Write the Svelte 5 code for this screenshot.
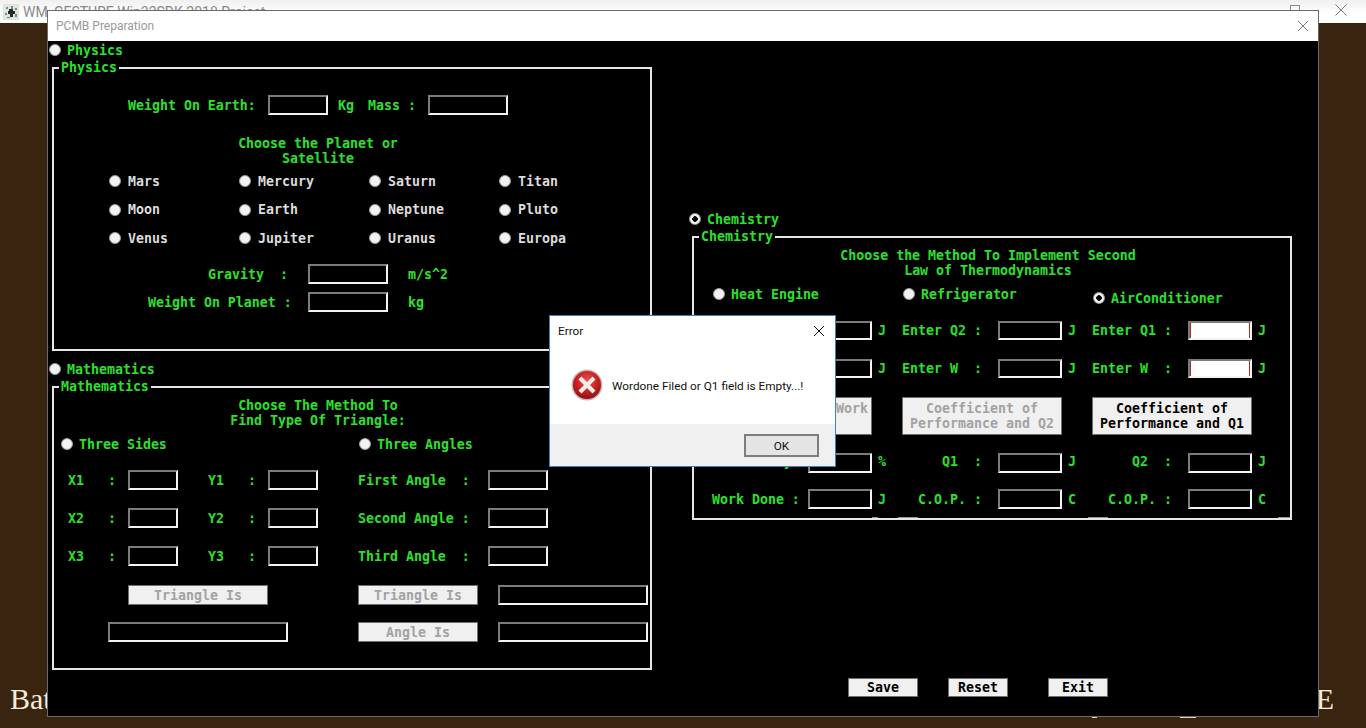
<script>
  const planets = ['Mars', 'Mercury', 'Saturn', 'Titan', 'Moon', 'Earth', 'Neptune', 'Pluto', 'Venus', 'Jupiter', 'Uranus', 'Europa'];

  const sideRows = [
    { x: 'X1', y: 'Y1', angle: 'First Angle  :' },
    { x: 'X2', y: 'Y2', angle: 'Second Angle :' },
    { x: 'X3', y: 'Y3', angle: 'Third Angle  :' }
  ];

  // one row of the thermodynamics table, three groups of label / field / unit
  const enterRows = [
    [
      { label: 'Enter Q1 :', unit: 'J' },
      { label: 'Enter Q2 :', unit: 'J' },
      { label: 'Enter Q1 :', unit: 'J', bad: true }
    ],
    [
      { label: 'Enter W  :', unit: 'J' },
      { label: 'Enter W  :', unit: 'J' },
      { label: 'Enter W  :', unit: 'J', bad: true }
    ]
  ];

  const resultRows = [
    [
      { label: 'Efficiency', unit: '%' },
      { label: 'Q1  :', unit: 'J', right: true },
      { label: 'Q2  :', unit: 'J', right: true }
    ],
    [
      { label: 'Work Done :', unit: 'J' },
      { label: 'C.O.P. :', unit: 'C', right: true },
      { label: 'C.O.P. :', unit: 'C', right: true }
    ]
  ];
</script>

<div class="desktop">
  <header class="appbar">
    <svg class="appicon" width="16" height="16" viewBox="0 0 16 16">
      <rect width="16" height="16" fill="#dfe6df" />
      <path d="M3 3h2v2H3zM8 2h2v3H8zM12 4h2v2h-2zM2 9h2v2H2zM12 10h2v3h-2zM4 13h3v1H4z" fill="#6f8f7c" />
      <path d="M6 5h4v2h2v3h-2v3H7v-3H5V7h1z" fill="#2a2a2a" />
    </svg>
    <span class="apptitle">WM_GESTURE Win32SDK 2018 Project</span>
    <span class="appctl min"></span>
    <span class="appctl restore"></span>
    <svg class="appclose" width="14" height="14" viewBox="0 0 14 14">
      <path d="M1.5 1.5l11 11M12.5 1.5l-11 11" stroke="#777" fill="none" />
    </svg>
  </header>

  <div class="backtext">
    <span>Bat</span>
    <span>E</span>
  </div>
  <span class="peek a"></span>
  <span class="peek b"></span>

  <section class="window">
    <div class="titlebar">
      <span>PCMB Preparation</span>
      <svg width="12" height="12" viewBox="0 0 12 12">
        <path d="M1 1l10 10M11 1L1 11" stroke="#777" fill="none" />
      </svg>
    </div>

    <div class="content">
      <div class="left">
        <label class="choice"><i class="radio"></i>Physics</label>
        <div class="panel physics">
          <span class="legend">Physics</span>
          <div class="earth-row">
            <span>Weight On Earth:</span>
            <span class="field"></span>
            <span class="unit">Kg</span>
            <span>Mass :</span>
            <span class="field"></span>
          </div>
          <div class="heading">Choose the Planet or<br />Satellite</div>
          <div class="planets">
            {#each planets as p}
              <label class="choice planet"><i class="radio"></i>{p}</label>
            {/each}
          </div>
          <div class="gravity-row">
            <span>Gravity  :</span>
            <span class="field"></span>
            <span class="unit wide">m/s^2</span>
          </div>
          <div class="planet-row">
            <span>Weight On Planet :</span>
            <span class="field"></span>
            <span class="unit wide">kg</span>
          </div>
        </div>

        <label class="choice second"><i class="radio"></i>Mathematics</label>
        <div class="panel maths">
          <span class="legend">Mathematics</span>
          <div class="heading small-top">Choose The Method To<br />Find Type Of Triangle:</div>
          <div class="method-row">
            <label class="choice"><i class="radio"></i>Three Sides</label>
            <label class="choice"><i class="radio"></i>Three Angles</label>
          </div>
          <div class="side-rows">
            {#each sideRows as r}
              <div class="side-row">
                <span>{r.x}</span><span>:</span><span class="field"></span>
                <span class="y">{r.y}</span><span>:</span><span class="field"></span>
                <span class="angle">{r.angle}</span><span class="field"></span>
              </div>
            {/each}
          </div>
          <div class="answer-row one">
            <button class="btn off" type="button">Triangle Is</button>
            <button class="btn off" type="button">Triangle Is</button>
            <span class="field"></span>
          </div>
          <div class="answer-row two">
            <span class="field"></span>
            <button class="btn off" type="button">Angle Is</button>
            <span class="field"></span>
          </div>
        </div>
      </div>

      <div class="right">
        <label class="choice chem-choice"><i class="radio on"></i>Chemistry</label>
        <div class="panel chemistry">
          <span class="legend">Chemistry</span>
          <div class="heading chem-heading">Choose the Method To Implement Second<br />Law of Thermodynamics</div>
          <div class="engine-row">
            <label class="choice"><i class="radio"></i>Heat Engine</label>
            <label class="choice"><i class="radio"></i>Refrigerator</label>
            <label class="choice lower"><i class="radio on"></i>AirConditioner</label>
          </div>
          <div class="table-rows enter">
            {#each enterRows as row}
              <div class="table-row">
                {#each row as c}
                  <span>{c.label}</span>
                  <span class="field" class:bad={c.bad}></span>
                  <span class="unit near">{c.unit}</span>
                {/each}
              </div>
            {/each}
          </div>
          <div class="method-btns">
            <button class="btn off" type="button">Efficiency and Work<br />Done</button>
            <button class="btn off" type="button">Coefficient of<br />Performance and Q2</button>
            <button class="btn" type="button">Coefficient of<br />Performance and Q1</button>
          </div>
          <div class="table-rows results">
            {#each resultRows as row}
              <div class="table-row">
                {#each row as c}
                  <span class="cell" class:to-right={c.right}>{c.label}</span>
                  <span class="field"></span>
                  <span class="cell unit near">{c.unit}</span>
                {/each}
              </div>
            {/each}
          </div>
        </div>

        <div class="actions">
          <button class="btn save" type="button">Save</button>
          <button class="btn reset" type="button">Reset</button>
          <button class="btn exit" type="button">Exit</button>
        </div>
      </div>
    </div>
  </section>

  <section class="dialog">
    <div class="dialog-title">
      <span>Error</span>
      <svg width="12" height="12" viewBox="0 0 12 12">
        <path d="M1 1l10 10M11 1L1 11" stroke="#111" fill="none" />
      </svg>
    </div>
    <div class="dialog-body">
      <svg width="32" height="32" viewBox="0 0 32 32">
        <defs>
          <radialGradient id="errfill" cx="50%" cy="35%" r="65%">
            <stop offset="0" stop-color="#e8534f" />
            <stop offset="0.6" stop-color="#c61f22" />
            <stop offset="1" stop-color="#8f1014" />
          </radialGradient>
        </defs>
        <circle cx="16" cy="16" r="15.5" fill="#c9b5b5" />
        <circle cx="16" cy="16" r="14" fill="url(#errfill)" />
        <path d="M10.5 7.500L16 13l5.500-5.500 3 3L19 16l5.500 5.500-3 3L16 19l-5.500 5.500-3-3L13 16l-5.500-5.500z" fill="#f3eeee" />
      </svg>
      <span>Wordone Filed or Q1 field is Empty...!</span>
    </div>
    <div class="dialog-foot">
      <button type="button">OK</button>
    </div>
  </section>
</div>

<style>
  :global(body) {
    margin: 0;
    background: #38240f;
  }

  .desktop {
    position: relative;
    width: 1366px;
    height: 728px;
    overflow: hidden;
    background: #38240f;
  }

  .appbar {
    display: flex;
    align-items: center;
    height: 23px;
    padding-left: 3px;
    background: linear-gradient(#f0f0f0, #fff 60%);
    color: #888;
    font: 14px Roboto, sans-serif;
  }
  .apptitle {
    margin-left: 4px;
  }
  .appctl {
    position: absolute;
    box-sizing: border-box;
  }
  .appctl.min {
    left: 1245px;
    top: 10px;
    width: 10px;
    height: 1px;
    background: #777;
  }
  .appctl.restore {
    left: 1290px;
    top: 5px;
    width: 10px;
    height: 10px;
    border: 1px solid #888;
  }
  .appclose {
    position: absolute;
    left: 1334px;
    top: 3px;
  }

  .backtext {
    position: absolute;
    left: 10px;
    right: 32px;
    top: 682px;
    display: flex;
    justify-content: space-between;
    color: #f6ecdc;
    font: 30px "Liberation Serif", serif;
  }
  .peek {
    position: absolute;
    top: 717px;
    height: 1px;
    background: #d8d0c0;
  }
  .peek.a {
    left: 1092px;
    width: 5px;
  }
  .peek.b {
    left: 1180px;
    width: 16px;
  }

  .window {
    position: absolute;
    left: 47px;
    top: 10px;
    width: 1272px;
    height: 707px;
    box-sizing: border-box;
    display: flex;
    flex-direction: column;
    border: 1px solid #6d6a66;
    background: #000;
  }
  .titlebar {
    display: flex;
    align-items: center;
    justify-content: space-between;
    height: 30px;
    flex: none;
    padding: 0 9px 0 8px;
    background: #fff;
    color: #999;
    font: 12px Roboto, sans-serif;
  }

  .content {
    flex: 1;
    display: flex;
    color: #2ce02c;
    font: bold 13.28px "DejaVu Sans Mono", monospace;
  }
  .left {
    width: 603px;
    box-sizing: border-box;
    padding-left: 1px;
    flex: none;
    margin-right: 1px;
  }
  .right {
    flex: 1;
    padding-left: 37px;
    display: flex;
    flex-direction: column;
  }

  .choice {
    display: flex;
    align-items: center;
    gap: 6px;
    height: 18px;
  }
  .radio {
    width: 12px;
    height: 12px;
    box-sizing: border-box;
    border-radius: 50%;
    flex: none;
    background: #f2f2f2;
    border: 1px solid #9a9a9a;
  }
  .radio.on {
    background: radial-gradient(circle, #000 0 2.5px, #f2f2f2 3px);
  }

  .second {
    margin-top: 9px;
  }
  .chem-choice {
    margin-top: 169px;
  }
  .left > .panel {
    margin-left: 3px;
    margin-top: 8px;
  }

  .panel {
    position: relative;
    box-sizing: border-box;
    width: 600px;
    height: 284px;
    border: 2px solid #e6e6e6;
  }
  .chemistry {
    margin-top: 8px;
    margin-left: 3px;
  }
  /* tops of the rows that are clipped by the bottom edge of the panel */
  .chemistry::after {
    content: '';
    position: absolute;
    left: 178px;
    bottom: 0;
    width: 418px;
    height: 1px;
    background:
      linear-gradient(#999, #999) 0 0 / 6px 1px no-repeat,
      linear-gradient(#999, #999) 26px 0 / 20px 1px no-repeat,
      linear-gradient(#999, #999) 216px 0 / 20px 1px no-repeat,
      linear-gradient(#999, #999) 406px 0 / 12px 1px no-repeat;
  }
  .legend {
    position: absolute;
    left: 5px;
    top: -9px;
    padding: 0 2px;
    line-height: 16px;
    background: #000;
  }

  .earth-row span,
  .gravity-row span,
  .planet-row span,
  .side-row span,
  .table-row span {
    white-space: pre;
  }

  .field {
    display: block;
    box-sizing: border-box;
    height: 20px;
    border: 2px solid;
    border-color: #7c7c7c #f4f4f4 #f4f4f4 #7c7c7c;
    background: #000;
  }
  .enter .field {
    height: 19px;
    margin-top: 1px;
  }
  .field.bad {
    background: #fff;
    box-shadow: inset 1px 0 0 #b3262c, inset -1px 0 0 #b3262c;
  }
  .unit {
    padding-left: 10px;
  }
  .unit.wide {
    padding-left: 20px;
  }
  .unit.near {
    padding-left: 6px;
  }

  .btn {
    display: block;
    box-sizing: border-box;
    height: 20px;
    padding: 0;
    border: 1px solid #6f6f6f;
    background: #f0f0f0;
    color: #000;
    font: inherit;
    line-height: 15px;
    white-space: pre;
  }
  .btn.off {
    color: #a2a2a2;
  }

  .heading {
    margin-top: 21px;
    padding-right: 68px;
    text-align: center;
    line-height: 15px;
  }
  .heading.small-top {
    margin-top: 10px;
  }
  .heading.chem-heading {
    margin-top: 10px;
    padding-right: 8px;
  }

  /* physics */
  .earth-row,
  .gravity-row,
  .planet-row {
    display: grid;
    align-items: center;
    height: 20px;
  }
  .earth-row {
    grid-template-columns: 140px 60px 40px 60px 80px;
    padding-left: 74px;
    margin-top: 26px;
  }
  .planets {
    display: grid;
    grid-template-columns: repeat(4, 130px);
    grid-auto-rows: 20px;
    row-gap: 8.5px;
    margin-top: 5px;
    padding-left: 55px;
    color: #dcdcdc;
  }
  .planet {
    height: 20px;
    gap: 7px;
  }
  .gravity-row {
    grid-template-columns: 100px 80px auto;
    padding-left: 154px;
    margin-top: 16px;
  }
  .planet-row {
    grid-template-columns: 160px 80px auto;
    padding-left: 94px;
    margin-top: 8px;
  }

  /* maths */
  .method-row {
    display: grid;
    grid-template-columns: 298px auto;
    padding-left: 7px;
    margin-top: 7px;
  }
  .side-rows {
    display: grid;
    row-gap: 18px;
    margin-top: 17px;
  }
  .side-row {
    display: grid;
    grid-template-columns: 40px 20px 50px 30px 40px 20px 50px 40px 130px 60px;
    align-items: center;
    height: 20px;
    padding-left: 14px;
  }
  .side-row .y {
    grid-column: 5;
  }
  .side-row .angle {
    grid-column: 9;
  }
  .answer-row {
    display: grid;
    align-items: center;
    height: 20px;
  }
  .answer-row.one {
    grid-template-columns: 140px 90px 120px 20px 150px;
    padding-left: 74px;
    margin-top: 19px;
  }
  .answer-row.one > :nth-child(2) {
    grid-column: 3;
  }
  .answer-row.one > :nth-child(3) {
    grid-column: 5;
  }
  .answer-row.two {
    grid-template-columns: 180px 70px 120px 20px 150px;
    padding-left: 54px;
    margin-top: 17px;
  }
  .answer-row.two > :nth-child(2) {
    grid-column: 3;
  }
  .answer-row.two > :nth-child(3) {
    grid-column: 5;
  }

  /* chemistry */
  .engine-row {
    display: grid;
    grid-template-columns: repeat(3, 190px);
    align-items: center;
    padding-left: 19px;
    margin-top: 7px;
  }
  .lower {
    transform: translateY(4px);
  }
  .table-rows {
    display: grid;
    padding-left: 18px;
  }
  .table-rows.enter {
    row-gap: 18px;
    margin-top: 17px;
  }
  .table-rows.results {
    row-gap: 16px;
    margin-top: 18px;
  }
  .table-row {
    display: grid;
    grid-template-columns: 96px 64px 30px 96px 64px 30px 96px 64px 30px;
    align-items: center;
    height: 20px;
  }
  .table-row:first-child .cell {
    margin-bottom: 3px;
  }
  .to-right {
    padding-right: 16px;
    text-align: right;
  }
  .method-btns {
    display: grid;
    grid-template-columns: repeat(3, 160px);
    column-gap: 30px;
    padding-left: 18px;
    margin-top: 19px;
  }
  .method-btns .btn {
    height: 38px;
  }

  .actions {
    display: flex;
    padding-left: 159px;
    margin-top: 158px;
  }
  .actions .btn {
    height: 19px;
    line-height: 17px;
  }
  .save {
    width: 70px;
  }
  .reset {
    width: 60px;
    margin-left: 30px;
  }
  .exit {
    width: 60px;
    margin-left: 40px;
  }

  /* message box */
  .dialog {
    position: absolute;
    left: 549px;
    top: 315px;
    width: 287px;
    height: 152px;
    box-sizing: border-box;
    display: flex;
    flex-direction: column;
    border: 1px solid #3f7fb5;
    background: #fff;
    color: #111;
    font: 11.8px Roboto, sans-serif;
  }
  .dialog-title {
    display: flex;
    align-items: center;
    justify-content: space-between;
    height: 29px;
    padding: 0 10px 0 8px;
  }
  .dialog-body {
    flex: 1;
    display: flex;
    align-items: center;
    gap: 9px;
    padding-left: 21px;
  }
  .dialog-body span {
    margin-top: 2px;
  }
  .dialog-foot {
    display: flex;
    justify-content: flex-end;
    height: 42px;
    box-sizing: border-box;
    padding: 10px 16px 0 0;
    background: #f0f0f0;
  }
  .dialog-foot button {
    width: 75px;
    height: 23px;
    padding: 0;
    border: 2px solid #7d7d7d;
    background: #e4e4e4;
    color: #111;
    font: inherit;
  }
</style>
